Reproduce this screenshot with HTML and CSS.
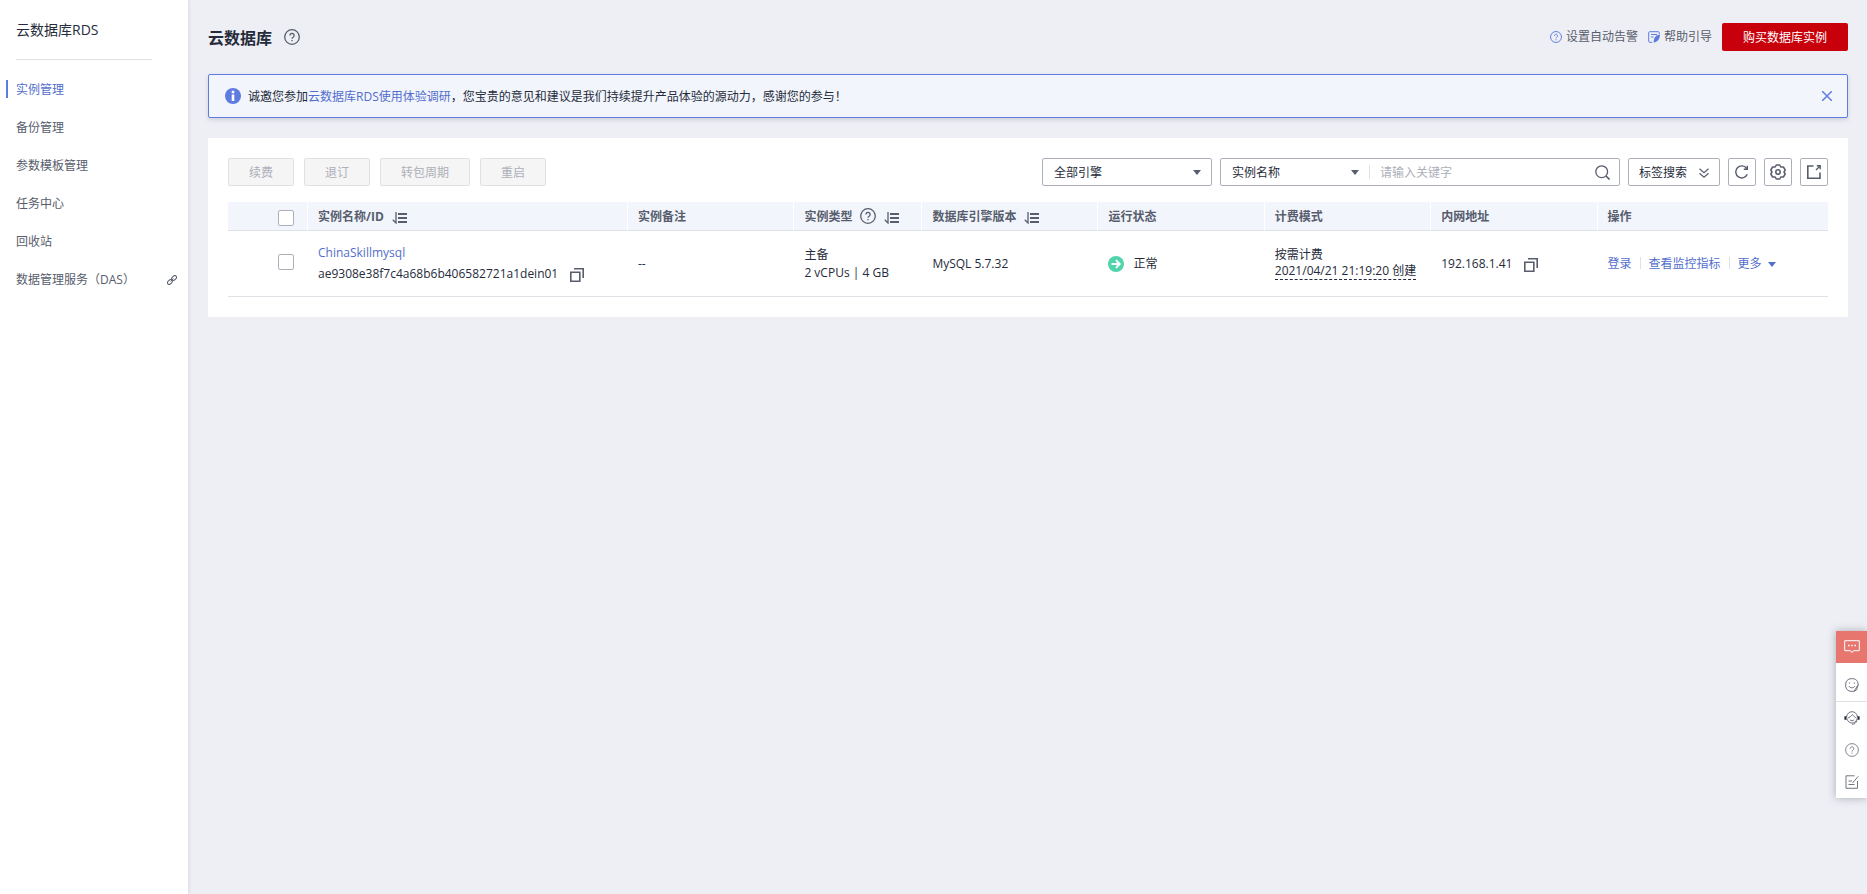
FILE: index.html
```html
<!DOCTYPE html>
<html lang="zh-CN">
<head>
    <meta charset="UTF-8">
    <meta name="viewport" content="width=device-width, initial-scale=1.0">
    <title>云数据库RDS</title>
    <link rel="stylesheet" href="styles.css">
</head>
<body>
    <!-- shared icons -->
    <svg class="sprite" aria-hidden="true">
        <symbol id="i-help" viewBox="0 0 16 16">
            <circle cx="8" cy="8" r="7.3"/>
            <path d="M5.9 6.4a2.1 2.1 0 1 1 3.2 1.8c-.7.4-1.1.8-1.1 1.6M8 11v1.3"/>
        </symbol>
        <symbol id="i-sort" viewBox="0 0 15 12">
            <path d="M4 0v11L.8 7.8" stroke-width="1.3"/>
            <path d="M6 2h9M6 6h9M6 10h9" stroke-width="2"/>
        </symbol>
        <symbol id="i-copy" viewBox="0 0 14 14">
            <path d="M.8 4.2h9v9h-9z" stroke-width="1.6"/>
            <path d="M4 .8h9.2V10" stroke-width="1.6"/>
        </symbol>
    </svg>

    <aside class="sidebar">
        <h2>云数据库RDS</h2>
        <nav>
            <a href="#" class="active">实例管理</a>
            <a href="#">备份管理</a>
            <a href="#">参数模板管理</a>
            <a href="#">任务中心</a>
            <a href="#">回收站</a>
            <a href="#">数据管理服务（DAS）
                <svg class="icon" width="10" height="10" viewBox="0 0 10 10"><rect x="4.4" y="1.2" width="5.4" height="3.6" rx="1.8" transform="rotate(-45 7.1 3)"/><rect x=".2" y="5.2" width="5.4" height="3.6" rx="1.8" transform="rotate(-45 2.9 7)"/><path d="M3.6 6.4l2.8-2.8"/></svg>
            </a>
        </nav>
    </aside>

    <main class="main">
        <header class="page-head">
            <h1>云数据库</h1>
            <svg class="icon bold" width="16" height="16"><use href="#i-help"/></svg>
            <div class="head-links">
                <a href="#"><svg class="icon blue bold" width="12" height="12"><use href="#i-help"/></svg>设置自动告警</a>
                <a href="#">
                    <svg class="icon blue" width="12" height="12" viewBox="0 0 12 12"><path d="M11.3 3V1.7a1 1 0 0 0-1-1H1.7a1 1 0 0 0-1 1v8.6a1 1 0 0 0 1 1h2.6M3 3.5h6M3 6h2.5"/><path d="M12 3.5C8 4 5.8 6 5.6 11.5 9.5 11 11.8 8.5 12 3.5z" fill="currentColor" stroke="none"/></svg>帮助引导</a>
            </div>
            <button type="button" class="btn-buy">购买数据库实例</button>
        </header>

        <div class="notice">
            <svg width="16" height="16" viewBox="0 0 16 16"><circle cx="8" cy="8" r="8" fill="#5e7ce0"/><path d="M8 2.8v2.4M8 6.5v6.5" stroke="#fff" stroke-width="2.6"/></svg>
            <p>诚邀您参加<a href="#">云数据库RDS使用体验调研</a>，您宝贵的意见和建议是我们持续提升产品体验的源动力，感谢您的参与！</p>
            <button type="button" class="notice-close" aria-label="关闭">
                <svg class="icon" width="10" height="10" viewBox="0 0 10 10"><path d="M0 0l10 10M10 0L0 10" stroke-width="1.5"/></svg>
            </button>
        </div>

        <section class="card">
            <div class="toolbar">
                <button type="button" class="btn" disabled>续费</button>
                <button type="button" class="btn" disabled>退订</button>
                <button type="button" class="btn" disabled>转包周期</button>
                <button type="button" class="btn" disabled>重启</button>

                <div class="filters">
                    <div class="box engine">
                        <select aria-label="引擎"><option>全部引擎</option></select>
                    </div>
                    <div class="box search">
                        <div class="field">
                            <select aria-label="搜索字段"><option>实例名称</option></select>
                        </div>
                        <input type="text" placeholder="请输入关键字" aria-label="关键字">
                        <button type="button" aria-label="搜索">
                            <svg class="icon" width="15" height="15" viewBox="0 0 15 15"><circle cx="6.7" cy="6.7" r="5.9" stroke-width="1.3"/><path d="M11 11l3.5 3.5" stroke-width="1.6"/></svg>
                        </button>
                    </div>
                    <button type="button" class="box tag">标签搜索
                        <svg class="icon" width="10" height="10" viewBox="0 0 10 10"><path d="M.5.8L5 4.6 9.5.8M.5 5.3L5 9.1l4.5-3.8" stroke-width="1.2"/></svg>
                    </button>
                    <button type="button" class="box square" aria-label="刷新">
                        <svg class="icon" width="14" height="14" viewBox="0 0 14 14"><path d="M12.3 9.3A6 6 0 1 1 11.6 3.3M12.3.8v3.4H8.800" stroke-width="1.4"/></svg>
                    </button>
                    <button type="button" class="box square" aria-label="设置">
                        <svg class="icon" width="16" height="16" viewBox="0 0 16 16"><path d="M6.300 1h3.400l1.100 2h2.600L15.200 6 14 8l1.200 2-1.800 3h-2.600l-1.100 2H6.300l-1.100-2H2.600L.8 10 2 8 .8 6l1.800-3h2.600z" stroke-width="1.500" stroke-linejoin="round"/><circle cx="8" cy="8" r="2.200" stroke-width="1.500"/></svg>
                    </button>
                    <button type="button" class="box square" aria-label="导出">
                        <svg class="icon" width="14" height="14" viewBox="0 0 14 14"><path d="M6.500 1H.8v12.200H13V7.500" stroke-width="1.600"/><path d="M9 5l3.500-3.500M9.800.8h3.400v3.400" stroke-width="1.400"/></svg>
                    </button>
                </div>
            </div>

            <table>
                <thead>
                    <tr>
                        <th class="c-check"><input type="checkbox" aria-label="全选"></th>
                        <th class="c-name">实例名称/ID<svg class="icon sort" width="15" height="12"><use href="#i-sort"/></svg></th>
                        <th class="c-std">实例备注</th>
                        <th class="c-type">实例类型<svg class="icon bold tip" width="16" height="16"><use href="#i-help"/></svg><svg class="icon sort" width="15" height="12"><use href="#i-sort"/></svg></th>
                        <th class="c-ver">数据库引擎版本<svg class="icon sort" width="15" height="12"><use href="#i-sort"/></svg></th>
                        <th class="c-std">运行状态</th>
                        <th class="c-std">计费模式</th>
                        <th class="c-std">内网地址</th>
                        <th>操作</th>
                    </tr>
                </thead>
                <tbody>
                    <tr>
                        <td class="c-check"><input type="checkbox" aria-label="ChinaSkillmysql"></td>
                        <td class="name">
                            <a href="#">ChinaSkillmysql</a>
                            <div>ae9308e38f7c4a68b6b406582721a1dein01<svg class="icon copy" width="14" height="14"><use href="#i-copy"/></svg></div>
                        </td>
                        <td>--</td>
                        <td>主备<br>2 vCPUs | 4 GB</td>
                        <td>MySQL 5.7.32</td>
                        <td>
                            <div class="status">
                                <svg width="16" height="16" viewBox="0 0 16 16"><circle cx="8" cy="8" r="8" fill="#50d4ab"/><path d="M3.5 8h8M8 4.2L11.8 8 8 11.8" fill="none" stroke="#fff" stroke-width="1.8"/></svg>正常
                            </div>
                        </td>
                        <td class="billing">按需计费<br><span class="created">2021/04/21 21:19:20 创建</span></td>
                        <td>192.168.1.41<svg class="icon copy" width="14" height="14"><use href="#i-copy"/></svg></td>
                        <td>
                            <div class="actions">
                                <a href="#">登录</a>
                                <a href="#">查看监控指标</a>
                                <a href="#" class="more">更多</a>
                            </div>
                        </td>
                    </tr>
                </tbody>
            </table>
        </section>
    </main>

    <div class="float-bar">
        <button type="button" class="feedback" aria-label="反馈">
            <svg class="icon" width="16" height="14" viewBox="0 0 16 14"><path d="M.7.7h14.6v10H9.5L8 12.7l-1.5-2H.7z"/><path d="M4 5.500h1.5M7.3 5.500h1.5M10.500 5.500H12" stroke-width="1.5"/></svg>
        </button>
        <button type="button" class="smile" aria-label="评价">
            <svg class="icon" width="14" height="14" viewBox="0 0 14 14"><path d="M12.5 3.5C11.5 1.5 9.5.7 7.5.7H6A5.3 5.3 0 0 0 .7 6v2A5.3 5.3 0 0 0 6 13.3h3l4.3-6.800-.8-3M9 13.3L11.5 12l1.800-5.500M3.800 8c1.500 2.400 4.700 2.400 6.200 0M4.500 4.500v1.200M9.300 4.500v1.200"/></svg>
        </button>
        <button type="button" aria-label="客服">
            <svg class="icon" width="16" height="14" viewBox="0 0 16 14"><path d="M2.5 6C3 2.800 5.200.7 8 .7S13 2.800 13.500 6M3 8c.8 2.600 2.700 4 5 4s4.200-1.400 5-4M3.500 7C5.500 6.500 7.500 5 8.500 3.500 9.500 5.200 11 6.500 12.500 7M5.800 8.700c1.300 1.400 3.100 1.400 4.400 0M13 9.500c-1 2.500-2.500 3.800-5 3.800"/><path d="M1.500 5.300v3.400M14.500 5.300v3.400" stroke="#252b3a" stroke-width="2.200"/></svg>
        </button>
        <button type="button" aria-label="帮助">
            <svg class="icon" width="14" height="14"><use href="#i-help"/></svg>
        </button>
        <button type="button" aria-label="建议">
            <svg class="icon" width="14" height="14" viewBox="0 0 14 14"><path d="M9.5.8H1v12.500h11.500V6M13.300 1.300L7.500 8M3.500 6H7M3.500 9.500h6"/></svg>
        </button>
    </div>
</body>
</html>
```

FILE: styles.css
```css
* {
    box-sizing: border-box;
}
body {
    display: flex;
    min-height: 100vh;
    margin: 0;
    background: #eeeff5;
    color: #252b3a;
    font-family: "Open Sans", "Noto Sans CJK SC", sans-serif;
    font-size: 12px;
    line-height: 18px;
}
h1, h2, p {
    margin: 0;
}
a {
    color: #526ecc;
    text-decoration: none;
}
button, input, select {
    font: inherit;
    color: inherit;
}
button {
    padding: 0;
    border: none;
    background: none;
    cursor: pointer;
}
svg {
    flex: none;
}
.sprite {
    position: absolute;
    width: 0;
    height: 0;
}
.icon {
    fill: none;
    stroke: currentColor;
    color: #575d6c;
}
.bold {
    stroke-width: 1.3;
}
.blue {
    color: #5e7ce0;
}

/* sidebar */
.sidebar {
    flex: none;
    width: 188px;
    background: #fff;
    box-shadow: 0 0 4px rgba(37, 43, 58, 0.15);
}
.sidebar h2 {
    margin: 0 36px 11px 16px;
    padding: 20px 0 19px;
    border-bottom: 1px solid #dfe1e6;
    font-size: 14px;
    font-weight: 400;
    line-height: 20px;
}
.sidebar nav a {
    display: flex;
    align-items: center;
    justify-content: space-between;
    height: 18px;
    margin: 20px 0 20px 6px;
    padding: 2px 11px 0 8px;
    border-left: 2px solid transparent;
    color: #575d6c;
}
.sidebar nav a.active {
    border-left-color: #5e7ce0;
    color: #526ecc;
}

/* page head */
.main {
    flex: 1;
    min-width: 0;
    padding: 23px 19px 20px 20px;
}
.page-head {
    display: flex;
    align-items: center;
    height: 28px;
    margin-bottom: 23px;
}
.page-head h1 {
    margin-right: 12px;
    padding-top: 2px;
    font-size: 16px;
    line-height: 24px;
}
.head-links {
    display: flex;
    gap: 10px;
    margin: 0 10px 0 auto;
}
.head-links a {
    display: flex;
    align-items: center;
    gap: 4px;
    color: #575d6c;
}
.btn-buy {
    height: 28px;
    padding: 2px 21px 0;
    border-radius: 2px;
    background: #c7000b;
    color: #fff;
}
.notice {
    display: flex;
    align-items: center;
    gap: 7px;
    height: 44px;
    margin-bottom: 20px;
    padding: 0 20px 0 16px;
    border: 1px solid #5e7ce0;
    border-radius: 2px;
    background: #f2f5fc;
    box-shadow: 0 2px 4px rgba(37, 43, 58, 0.15);
}
.notice p {
    padding-top: 2px;
}
.notice-close {
    display: flex;
    margin-left: auto;
    margin-right: -5px;
}
.notice-close .icon {
    color: #5e7ce0;
}

/* instance list */
.card {
    padding: 20px;
    background: #fff;
}
.toolbar {
    display: flex;
    gap: 10px;
    margin-bottom: 16px;
}
.btn {
    height: 28px;
    padding: 2px 20px 0;
    border: 1px solid #dfe1e6;
    border-radius: 2px;
    background: #f5f5f6;
    color: #adb0b8;
    cursor: not-allowed;
}
.filters {
    display: flex;
    gap: 8px;
    margin-left: auto;
}
.box {
    display: flex;
    align-items: center;
    justify-content: center;
    height: 28px;
    border: 1px solid #adb0b8;
    border-radius: 2px;
    background: #fff;
}
.box select {
    width: 100%;
    height: 26px;
    padding: 2px 11px 0;
    border: none;
    background: none;
    appearance: none;
    outline: none;
}
.engine, .field {
    position: relative;
}
.engine::after, .field::after, .more::after {
    content: "";
    border: 4px solid transparent;
    border-top: 5px solid #575d6c;
    border-bottom: none;
}
.engine::after, .field::after {
    position: absolute;
    right: 10px;
    top: 11px;
    pointer-events: none;
}
.engine {
    width: 170px;
}
.search {
    width: 400px;
}
.field {
    width: 148px;
}
.search input {
    flex: 1;
    min-width: 0;
    height: 14px;
    padding: 2px 10px 0;
    border: none;
    border-left: 1px solid #dfe1e6;
    outline: none;
}
.search input::placeholder {
    color: #adb0b8;
}
.search button {
    display: flex;
    margin-right: 9px;
}
.tag {
    gap: 12px;
    width: 92px;
    padding-top: 2px;
}
.square {
    width: 28px;
}

table {
    width: 100%;
    border-collapse: separate;
    border-spacing: 0;
    table-layout: fixed;
}
th {
    height: 29px;
    padding: 2px 0 0 10px;
    border-right: 1px solid #fff;
    border-bottom: 1px solid #dfe1e6;
    background: #f2f5fc;
    color: #575d6c;
    text-align: left;
    white-space: nowrap;
}
th:last-child {
    border-right: none;
}
td {
    height: 66px;
    padding: 0 0 0 10px;
    border-bottom: 1px solid #dfe1e6;
}
.c-check {
    width: 5%;
    padding: 2px 13px 0 0;
    text-align: right;
}
td.c-check {
    padding: 0 14px 4px 0;
}
.c-name {
    width: 20%;
}
.c-std {
    width: 10.4%;
}
.c-type {
    width: 8%;
}
.c-ver {
    width: 11%;
}
input[type="checkbox"] {
    width: 16px;
    height: 16px;
    margin: 0;
    border: 1px solid #adb0b8;
    border-radius: 2px;
    background: #fff;
    appearance: none;
    vertical-align: middle;
}
.sort {
    margin-left: 8px;
    vertical-align: -3px;
}
.tip {
    margin-left: 8px;
    vertical-align: -3px;
}
.copy {
    margin-left: 12px;
    vertical-align: -4px;
}
.name a {
    display: inline-block;
    margin-bottom: 3px;
}
.status {
    display: flex;
    align-items: center;
    gap: 9px;
}
.billing {
    line-height: 16px;
}
.created {
    display: inline-block;
    border-bottom: 1px dashed #252b3a;
}
.actions {
    display: flex;
    align-items: center;
}
.actions a + a {
    margin-left: 8px;
}
.actions a + a::before {
    content: "";
    display: inline-block;
    height: 12px;
    margin-right: 8px;
    border-left: 1px solid #dfe1e6;
    vertical-align: -1px;
}
.more::after {
    display: inline-block;
    margin-left: 6px;
    border-top-color: #526ecc;
    vertical-align: 1px;
}

/* floating helper, pinned over the page */
.float-bar {
    position: fixed;
    right: 0;
    bottom: 96px;
    display: flex;
    flex-direction: column;
    width: 31px;
    background: #fff;
    box-shadow: 0 0 8px rgba(37, 43, 58, 0.35);
}
.float-bar button {
    display: flex;
    align-items: center;
    justify-content: center;
    height: 32px;
}
.float-bar .icon {
    color: #71757f;
}
.float-bar .feedback {
    margin-bottom: 5px;
    background: #e7766e;
}
.float-bar .feedback .icon {
    color: #fff;
}
.float-bar .smile {
    height: 34px;
    border-bottom: 1px solid #dfe1e6;
}
```
